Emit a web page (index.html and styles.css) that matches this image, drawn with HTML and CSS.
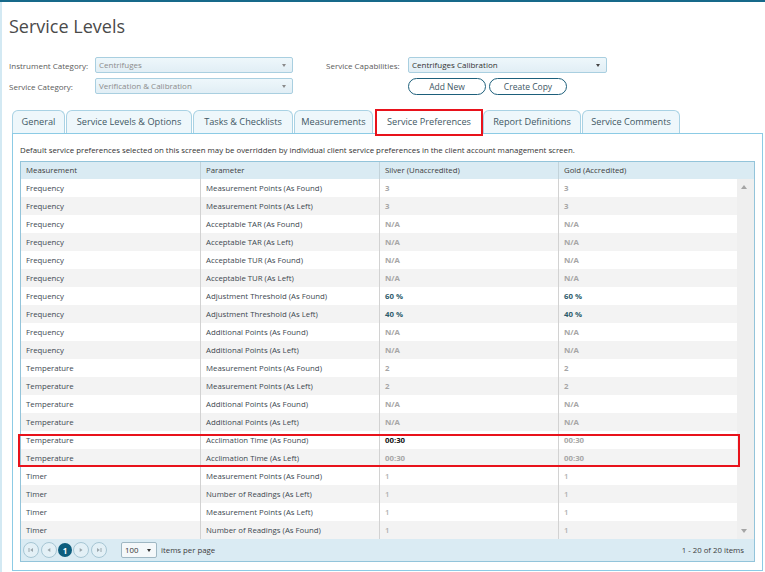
FILE: index.html
```html
<!DOCTYPE html>
<html>
<head>
<meta charset="utf-8">
<link rel="stylesheet" href="styles.css">
</head>
<body>
<div class="app">
  <h1 class="title">Service Levels</h1>
  <div class="filters">
    <div class="fcol">
      <div class="frow">
        <span class="flabel">Instrument Category:</span>
        <div class="select dis"><span>Centrifuges</span><i class="caret"></i></div>
      </div>
      <div class="frow">
        <span class="flabel">Service Category:</span>
        <div class="select dis"><span>Verification &amp; Calibration</span><i class="caret"></i></div>
      </div>
    </div>
    <div class="fcol fright">
      <div class="frow">
        <span class="flabel flabel2">Service Capabilities:</span>
        <div class="select sel2"><span>Centrifuges Calibration</span><i class="caret"></i></div>
      </div>
      <div class="frow btnrow">
        <span class="flabel flabel2"></span>
        <button class="pill">Add New</button>
        <button class="pill">Create Copy</button>
      </div>
    </div>
  </div>

  <div class="tabs">
    <div class="tab t1">General</div>
    <div class="tab t2">Service Levels &amp; Options</div>
    <div class="tab t3">Tasks &amp; Checklists</div>
    <div class="tab t4">Measurements</div>
    <div class="tab t5 active">Service Preferences</div>
    <div class="tab t6">Report Definitions</div>
    <div class="tab t7">Service Comments</div>
  </div>

  <div class="panel">
    <p class="note">Default service preferences selected on this screen may be overridden by individual client service preferences in the client account management screen.</p>
    <div class="grid">
      <div class="ghead">
        <div class="hc">Measurement</div>
        <div class="hc">Parameter</div>
        <div class="hc">Silver (Unaccredited)</div>
        <div class="hc">Gold (Accredited)</div>
        <div class="hc hs"></div>
      </div>
      <div class="gbody">
        <div class="rows">
          <div class="row"><div class="c">Frequency</div><div class="c">Measurement Points (As Found)</div><div class="c v">3</div><div class="c v">3</div></div>
          <div class="row"><div class="c">Frequency</div><div class="c">Measurement Points (As Left)</div><div class="c v">3</div><div class="c v">3</div></div>
          <div class="row"><div class="c">Frequency</div><div class="c">Acceptable TAR (As Found)</div><div class="c v">N/A</div><div class="c v">N/A</div></div>
          <div class="row"><div class="c">Frequency</div><div class="c">Acceptable TAR (As Left)</div><div class="c v">N/A</div><div class="c v">N/A</div></div>
          <div class="row"><div class="c">Frequency</div><div class="c">Acceptable TUR (As Found)</div><div class="c v">N/A</div><div class="c v">N/A</div></div>
          <div class="row"><div class="c">Frequency</div><div class="c">Acceptable TUR (As Left)</div><div class="c v">N/A</div><div class="c v">N/A</div></div>
          <div class="row"><div class="c">Frequency</div><div class="c">Adjustment Threshold (As Found)</div><div class="c v teal">60 %</div><div class="c v teal">60 %</div></div>
          <div class="row"><div class="c">Frequency</div><div class="c">Adjustment Threshold (As Left)</div><div class="c v teal">40 %</div><div class="c v teal">40 %</div></div>
          <div class="row"><div class="c">Frequency</div><div class="c">Additional Points (As Found)</div><div class="c v">N/A</div><div class="c v">N/A</div></div>
          <div class="row"><div class="c">Frequency</div><div class="c">Additional Points (As Left)</div><div class="c v">N/A</div><div class="c v">N/A</div></div>
          <div class="row"><div class="c">Temperature</div><div class="c">Measurement Points (As Found)</div><div class="c v">2</div><div class="c v">2</div></div>
          <div class="row"><div class="c">Temperature</div><div class="c">Measurement Points (As Left)</div><div class="c v">2</div><div class="c v">2</div></div>
          <div class="row"><div class="c">Temperature</div><div class="c">Additional Points (As Found)</div><div class="c v">N/A</div><div class="c v">N/A</div></div>
          <div class="row"><div class="c">Temperature</div><div class="c">Additional Points (As Left)</div><div class="c v">N/A</div><div class="c v">N/A</div></div>
          <div class="row"><div class="c">Temperature</div><div class="c">Acclimation Time (As Found)</div><div class="c v dark">00:30</div><div class="c v">00:30</div></div>
          <div class="row"><div class="c">Temperature</div><div class="c">Acclimation Time (As Left)</div><div class="c v">00:30</div><div class="c v">00:30</div></div>
          <div class="row"><div class="c">Timer</div><div class="c">Measurement Points (As Found)</div><div class="c v lt">1</div><div class="c v lt">1</div></div>
          <div class="row"><div class="c">Timer</div><div class="c">Number of Readings (As Left)</div><div class="c v lt">1</div><div class="c v lt">1</div></div>
          <div class="row"><div class="c">Timer</div><div class="c">Measurement Points (As Left)</div><div class="c v lt">1</div><div class="c v lt">1</div></div>
          <div class="row"><div class="c">Timer</div><div class="c">Number of Readings (As Found)</div><div class="c v lt">1</div><div class="c v lt">1</div></div>
        </div>
        <div class="vscroll">
          <i class="arr up"></i>
          <i class="arr down"></i>
        </div>
        <div class="hl"></div>
      </div>
      <div class="pager">
        <div class="pbtns">
          <span class="pb"><svg width="8" height="8" viewBox="0 0 8 8"><rect x="1.5" y="2" width="1" height="4" fill="#9aa6ac"/><path d="M6 2 L3.2 4 L6 6 Z" fill="#9aa6ac"/></svg></span>
          <span class="pb"><svg width="8" height="8" viewBox="0 0 8 8"><path d="M5.3 2 L2.5 4 L5.3 6 Z" fill="#9aa6ac"/></svg></span>
          <span class="pb cur">1</span>
          <span class="pb"><svg width="8" height="8" viewBox="0 0 8 8"><path d="M2.7 2 L5.5 4 L2.7 6 Z" fill="#9aa6ac"/></svg></span>
          <span class="pb"><svg width="8" height="8" viewBox="0 0 8 8"><path d="M2 2 L4.8 4 L2 6 Z" fill="#9aa6ac"/><rect x="5.5" y="2" width="1" height="4" fill="#9aa6ac"/></svg></span>
        </div>
        <div class="psize"><span>100</span><i class="caret dk"></i></div>
        <span class="ptext">items per page</span>
        <span class="pinfo">1 - 20 of 20 items</span>
      </div>
    </div>
  </div>
</div>
</body>
</html>
```

FILE: styles.css
```css
* { box-sizing: border-box; }
html, body { margin: 0; padding: 0; background: #fff; }
body {
  font-family: "Open Sans", "Noto Sans", "DejaVu Sans", sans-serif;
  color: #444;
  width: 765px;
  height: 572px;
  overflow: hidden;
}
.app {
  width: 765px;
  height: 572px;
  border-top: 2px solid #16698a;
  box-shadow: inset 2px 0 0 #d3e9f3;
}
.title {
  margin: 13px 0 0 9px;
  font-size: 18px;
  line-height: 22px;
  font-weight: 400;
  color: #4a4a4a;
}
.filters {
  display: flex;
  margin-top: 20px;
  padding-left: 9px;
}
.fcol { display: flex; flex-direction: column; gap: 5px; }
.fright { margin-left: 33px; }
.frow { display: flex; align-items: center; height: 16px; }
.btnrow { height: 17px; gap: 3px; }
.btnrow .flabel2 { margin-right: -3px; }
.flabel {
  width: 86px;
  font-size: 8px;
  color: #5a5a5a;
}
.flabel2 { width: 82px; }
.select {
  position: relative;
  width: 198px;
  height: 16px;
  border: 1px solid #a9cfe0;
  border-radius: 2px;
  background: linear-gradient(#eef7fb, #e1eef5);
  font-size: 8px;
  line-height: 14px;
  padding-left: 3px;
  color: #333;
}
.select.dis { color: #8c8c8c; }
.sel2 { width: 199px; }
.caret {
  position: absolute;
  right: 6px;
  top: 6px;
  width: 0; height: 0;
  border-left: 2.5px solid transparent;
  border-right: 2.5px solid transparent;
  border-top: 3px solid #8a8a8a;
}
.sel2 .caret { border-top-color: #444; }
.caret.dk { border-top-color: #333; right: 5px; top: 6px; }
.pill {
  width: 78px;
  height: 17px;
  border: 1.5px solid #1d5f7b;
  border-radius: 9px;
  background: #fff;
  font-family: inherit;
  font-size: 8.5px;
  color: #3d5663;
  padding: 0;
  line-height: 13px;
}

.tabs {
  display: flex;
  gap: 1px;
  margin: 15px 0 0 12px;
  height: 23px;
}
.tab {
  height: 23px;
  padding: 0;
  text-align: center;
  border: 1px solid #a9d2e4;
  border-bottom: none;
  border-radius: 6px 6px 0 0;
  background: #eef7fb;
  font-size: 9.2px;
  line-height: 22px;
  color: #3f5864;
  white-space: nowrap;
}
.t1 { width: 53px; }
.t2 { width: 126px; }
.t3 { width: 100px; }
.t4 { width: 79px; }
.t5 { width: 104px; }
.t6 { width: 98px; }
.t7 { width: 98px; }
.tab.active {
  background: #fff;
  height: 23px;
  margin: 1px 1px 0 3px;
  position: relative;
  z-index: 2;
  outline: 2px solid #e8121b;
  outline-offset: 0;
  border: none;
  border-radius: 0;
  line-height: 21px;
}

.panel {
  margin-left: 12px;
  width: 751px;
  border: 1px solid #8ccbe5;
  padding: 10px 7px 8px 7px;
}
.note {
  margin: 0 0 5px 0;
  font-size: 7.85px;
  line-height: 12px;
  color: #333;
  white-space: nowrap;
}
.grid {
  border: 1px solid #93c4da;
  width: 735px;
}
.ghead {
  display: grid;
  grid-template-columns: 179px 179px 179px 179px 17px;
  height: 17px;
  background: #daebf3;
}
.hc {
  font-size: 7.8px;
  line-height: 17px;
  padding-left: 5px;
  color: #3c3c3c;
  border-left: 1px solid #c3d3da;
}
.hc:first-child { border-left: none; }
.hs { border-left: none; }
.gbody {
  position: relative;
  display: flex;
}
.rows { width: 716px; }
.row {
  display: grid;
  grid-template-columns: 179px 179px 179px 179px;
  height: 18px;
  background: #fff;
}
.row:nth-child(even) { background: #f3f3f3; }
.c {
  font-size: 7.8px;
  line-height: 18px;
  padding-left: 5px;
  color: #3d4850;
  border-left: 1px solid #d2d2d2;
  white-space: nowrap;
  overflow: hidden;
}
.c:first-child { border-left: none; }
.v { color: #a6a6a6; font-weight: 700; }
.v.lt { font-weight: 600; color: #b0b0b0; }
.v.teal { color: #2d5b6c; }
.v.dark { color: #111; }
.vscroll {
  width: 17px;
  background: #efefef;
  position: relative;
}
.arr {
  position: absolute;
  left: 4px;
  width: 0; height: 0;
  border-left: 3.5px solid transparent;
  border-right: 3.5px solid transparent;
}
.arr.up { top: 6px; border-bottom: 4px solid #a5a5a5; }
.arr.down { bottom: 6px; border-top: 4px solid #a5a5a5; }
.hl {
  position: absolute;
  top: 255px;
  left: -3px;
  width: 722px;
  height: 33px;
  border: 2px solid #e8121b;
  pointer-events: none;
}
.pager {
  display: flex;
  align-items: center;
  height: 22px;
  background: #daebf3;
  padding-left: 2px;
  padding-right: 10px;
}
.pbtns { display: flex; align-items: center; gap: 2px; }
.pb {
  width: 16px;
  height: 16px;
  border: 1px solid #a6c6d4;
  border-radius: 50%;
  display: flex;
  align-items: center;
  justify-content: center;
  background: #e3f0f6;
}
.pb.cur {
  width: 14px;
  height: 14px;
  margin: 0 -1px;
  border: none;
  background: #0d5d7d;
  color: #fff;
  font-size: 8px;
  font-weight: 700;
}
.psize {
  position: relative;
  margin-left: 14px;
  width: 36px;
  height: 16px;
  border: 1px solid #9fb7c3;
  border-radius: 2px;
  background: #f4f8fa;
  font-size: 7.8px;
  line-height: 14px;
  padding-left: 3px;
  color: #333;
}
.ptext {
  margin-left: 4px;
  font-size: 7.8px;
  color: #3c3c3c;
}
.pinfo {
  margin-left: auto;
  font-size: 7.8px;
  color: #3c3c3c;
}
```
